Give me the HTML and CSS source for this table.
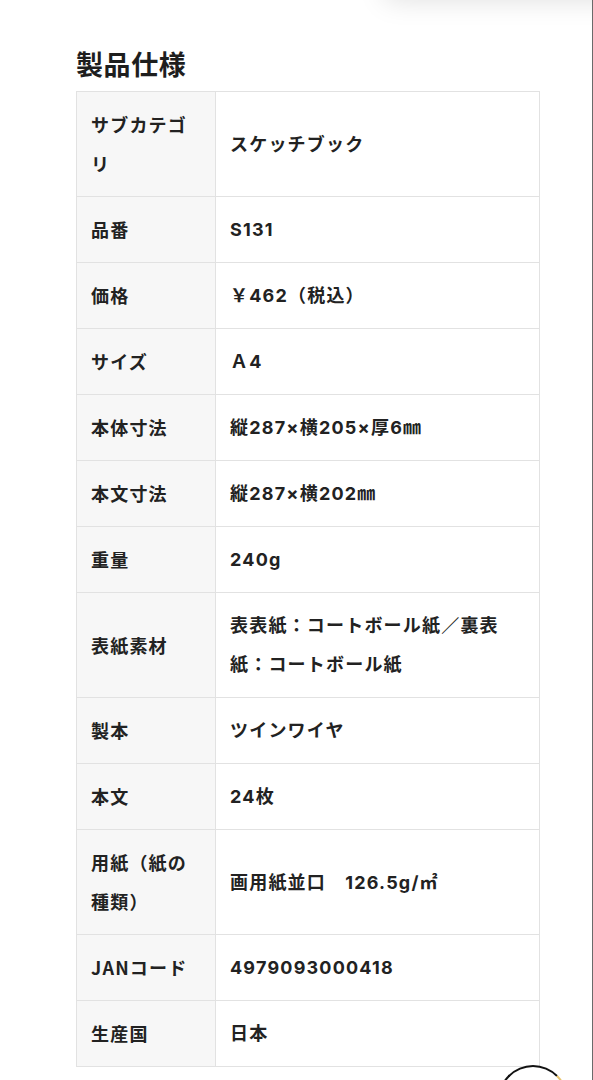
FILE: index.html
```html
<!DOCTYPE html>
<html lang="ja">
<head>
<meta charset="utf-8">
<title>製品仕様</title>
<link rel="stylesheet" href="styles.css">
</head>
<body>
<div class="page">
  <div class="top-shadow"></div>
  <section class="spec">
    <h2 class="spec-title">製品仕様</h2>
    <table class="spec-table">
      <tr><th>サブカテゴリ</th><td>スケッチブック</td></tr>
      <tr><th>品番</th><td>S131</td></tr>
      <tr><th>価格</th><td>￥462（税込）</td></tr>
      <tr><th>サイズ</th><td>Ａ4</td></tr>
      <tr><th>本体寸法</th><td>縦287×横205×厚6㎜</td></tr>
      <tr><th>本文寸法</th><td>縦287×横202㎜</td></tr>
      <tr><th>重量</th><td>240g</td></tr>
      <tr><th>表紙素材</th><td>表表紙：コートボール紙／裏表紙：コートボール紙</td></tr>
      <tr><th>製本</th><td>ツインワイヤ</td></tr>
      <tr><th>本文</th><td>24枚</td></tr>
      <tr><th>用紙（紙の種類）</th><td>画用紙並口　126.5g/㎡</td></tr>
      <tr><th>JANコード</th><td>4979093000418</td></tr>
      <tr><th>生産国</th><td>日本</td></tr>
    </table>
  </section>
  <div class="float-btn"></div>
</div>
</body>
</html>
```

FILE: styles.css
```css
html, body {
  margin: 0;
  padding: 0;
  background: #fff;
}
body {
  font-family: Inter, "Noto Sans CJK JP", "Noto Sans", sans-serif;
  color: #222;
}
.page {
  position: relative;
  width: 593px;
  height: 1080px;
  overflow: hidden;
  box-sizing: border-box;
  border-right: 1px solid #6a6a6a;
}
.top-shadow {
  position: absolute;
  top: -70px;
  left: 385px;
  width: 260px;
  height: 70px;
  background: #fff;
  box-shadow: 0 0 28px rgba(0, 0, 0, 0.13);
}
.spec {
  padding: 44px 0 0 76px;
}
.spec-title {
  margin: 0 0 7px;
  font-family: "Noto Sans CJK JP", sans-serif;
  font-size: 27px;
  line-height: 40px;
  font-weight: 700;
  letter-spacing: 0.6px;
  color: #1e1e1e;
}
.spec-table {
  width: 464px;
  border-collapse: collapse;
  table-layout: fixed;
}
.spec-table th,
.spec-table td {
  border: 1px solid #e2e2e2;
  font-size: 18px;
  line-height: 39px;
  font-weight: 700;
  text-align: left;
  vertical-align: middle;
  padding: 13px 14px 13px 14px;
  letter-spacing: 1.2px;
  color: #222;
  word-break: break-all;
}
.spec-table th {
  width: 110px;
  background: #f7f7f7;
  font-family: "Noto Sans CJK JP", sans-serif;
}
.spec-table td {
  background: #fff;
}
.float-btn {
  position: absolute;
  left: 498px;
  top: 1065px;
  width: 70px;
  height: 70px;
  border-radius: 50%;
  box-sizing: border-box;
  border: 2px solid #111;
  border-right-color: #e8c36a;
  background: #fff;
}
```
